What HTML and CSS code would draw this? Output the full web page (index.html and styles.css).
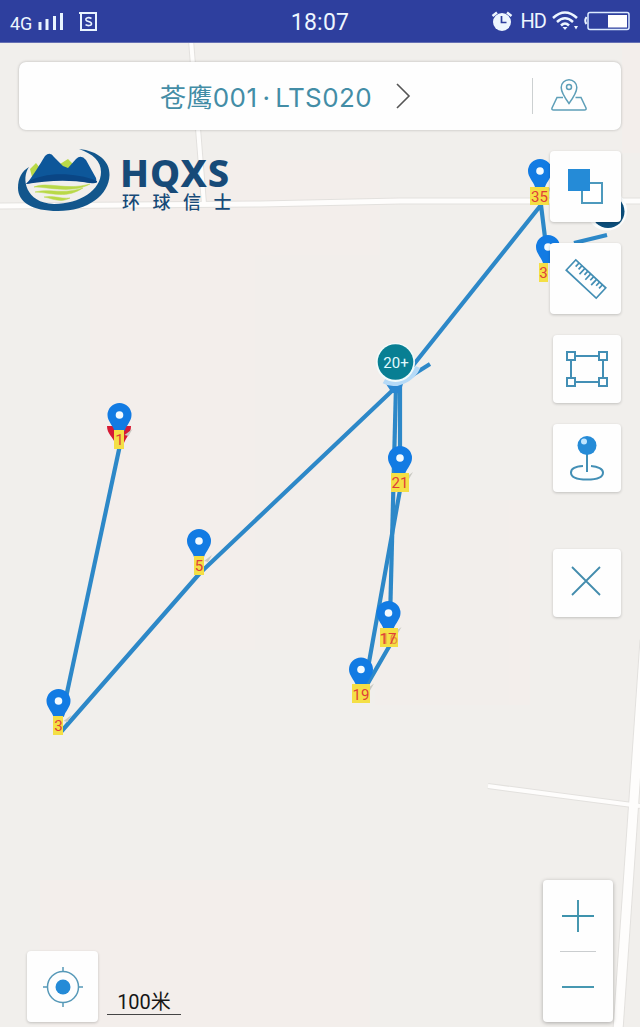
FILE: index.html
```
<!DOCTYPE html>
<html lang="zh-CN">
<head>
    <meta charset="UTF-8">
    <meta name="viewport" content="width=device-width, initial-scale=1.0">
    <title>苍鹰001·LTS020</title>
    <link rel="stylesheet" href="styles.css">
</head>
<body>
    <div class="screen">
        <svg class="map" viewBox="0 0 640 1027">
            <defs>
                <g id="pin">
                    <path d="M5 20L13 14L9 21Z" fill="#c9c9c2"/>
                    <path d="M0 -12A12 12 0 0 0 -12 0C-12 6 -7 10 -5 16H5C7 10 12 6 12 0A12 12 0 0 0 0 -12Z"/>
                    <circle r="3.8" fill="#f2faff"/>
                </g>
            </defs>

            <!-- tinted land -->
            <g class="land">
                <rect x="90" y="160" width="290" height="490"/>
                <rect x="375" y="500" width="155" height="205"/>
                <rect x="40" y="880" width="330" height="147"/>
                <rect x="622" y="43" width="18" height="110"/>
            </g>

            <!-- roads -->
            <g class="road-edge">
                <path d="M191 40L204 204" stroke-width="6"/>
                <path d="M0 206L260 204L400 201L640 201" stroke-width="7"/>
                <path d="M488 786L640 806" stroke-width="6"/>
                <path d="M645 640L618 1030" stroke-width="11"/>
            </g>
            <g class="road">
                <path d="M191 40L204 204" stroke-width="4"/>
                <path d="M0 206L260 204L400 201L640 201" stroke-width="5"/>
                <path d="M488 786L640 806" stroke-width="4"/>
                <path d="M645 640L618 1030" stroke-width="9"/>
            </g>

            <!-- track -->
            <g class="track">
                <path d="M120 445L62 716"/>
                <path d="M60 733L200 573L395 388L541 205L548 262"/>
                <path d="M396 386L390 620"/>
                <path d="M400 386L400 490L364 690L390 645"/>
                <path d="M395 386L430 364"/>
                <path d="M574 243L607 235"/>
                <path d="M386 384H403L400 393H392Z" fill="#2a87d0" stroke="none"/>
            </g>

            <path d="M384 381C396 388 413 379 418 367" fill="none" stroke="#b5daf7" stroke-width="5"/>
            <circle cx="395.500" cy="362.500" r="19.500" fill="#f2fbfb"/>
            <circle cx="395.500" cy="362" r="17.800" fill="#087f93"/>
            <text class="cluster" x="396" y="368">20+</text>

            <circle cx="607" cy="210.500" r="20" fill="#fbfdfd"/>
            <circle cx="608" cy="211.500" r="16.500" fill="#0c4f7c"/>

            <!-- points -->
            <path d="M107 426C107 434 113 437 115 443H124C126 437 131 434 131 426Z" fill="#d61a34"/>
            <g class="pins">
                <use href="#pin" x="119.500" y="415"/>
                <use href="#pin" x="199" y="541"/>
                <use href="#pin" x="58.500" y="701"/>
                <use href="#pin" x="400" y="458"/>
                <use href="#pin" x="388.500" y="613"/>
                <use href="#pin" x="361" y="669.500"/>
                <use href="#pin" x="540" y="171"/>
                <use href="#pin" x="548" y="247"/>
            </g>
            <g class="tags">
                <rect x="114" y="430" width="10" height="19"/>
                <rect x="194" y="556" width="10" height="19"/>
                <rect x="53" y="716" width="10" height="19"/>
                <rect x="391" y="473" width="18" height="19"/>
                <rect x="380" y="628" width="18" height="19"/>
                <rect x="352" y="684" width="18" height="19"/>
                <rect x="530" y="187" width="19" height="18"/>
                <rect x="539" y="263" width="9" height="19"/>
            </g>
            <g class="numbers">
                <text x="119.500" y="445">1</text>
                <text x="199" y="571">5</text>
                <text x="58.500" y="731">3</text>
                <text x="400" y="488">21</text>
                <text x="389.500" y="643.500" opacity=".5">16</text>
                <text x="388" y="643.500">17</text>
                <text x="361" y="700">19</text>
                <text x="539.500" y="201.500">35</text>
                <text x="543.500" y="278">3</text>
            </g>
        </svg>

        <header class="status">
            <div class="status-left">
                <span class="net">4G</span>
                <svg class="signal" width="26" height="20" viewBox="0 0 26 20">
                    <path d="M2 19V11M9 19V8M16.500 19V5M23.500 19V2" stroke="#e8f4ff" stroke-width="3"/>
                </svg>
                <svg class="sim" width="18" height="20" viewBox="0 0 18 20" fill="none" stroke="#e8f4ff">
                    <path d="M0 2H17V19H2V2" stroke-width="2"/>
                    <path d="M12.500 7.500C10 6 6.500 6.500 7 9C7.500 11 12.500 10 12.500 12.800C12.500 15 8.500 15 6.500 13.700" stroke-width="1.600"/>
                </svg>
            </div>
            <span class="time">18:07</span>
            <div class="status-right">
                <svg width="22" height="20" viewBox="0 0 22 20">
                    <circle cx="11" cy="11" r="9" fill="#edf6ff"/>
                    <path d="M1.500 5L6 1.500M20.500 5L16 1.500" stroke="#edf6ff" stroke-width="2.500"/>
                    <path d="M10.500 5V11.500H15.500" fill="none" stroke="#2e3f9e" stroke-width="1.700"/>
                </svg>
                <span class="hd">HD</span>
                <svg class="wifi" width="28" height="20" viewBox="0 0 28 20" fill="none" stroke="#edf6ff" stroke-width="2.500">
                    <path d="M1 7Q13 -4 25 7M5 11Q13 3.500 21 11M9 14.500Q13 10.500 17 14.500"/>
                    <path d="M10.500 16H15.500L13 19Z" fill="#edf6ff" stroke="none"/>
                    <path d="M22 15H26L24 18.500Z" fill="#edf6ff" stroke="none"/>
                </svg>
                <svg width="46" height="20" viewBox="0 0 46 20">
                    <path d="M2.500 6Q0 10 2.500 13" fill="none" stroke="#edf6ff" stroke-width="2"/>
                    <rect x="4" y="1.500" width="41" height="17" rx="2" fill="none" stroke="#dcebff" stroke-width="1.500"/>
                    <rect x="24" y="4" width="19" height="12.500" fill="#fff"/>
                </svg>
            </div>
        </header>

        <main class="overlay">
            <div class="search">
                <div class="device">
                    <span class="device-name">苍鹰001<span class="dot">·</span>LTS020</span>
                    <svg width="16" height="28" viewBox="0 0 16 28">
                        <path d="M2 2L14 14L2 26" fill="none" stroke="#555" stroke-width="1.600"/>
                    </svg>
                </div>
                <div class="place">
                    <svg width="36" height="34" viewBox="0 0 36 34" fill="none" stroke="#5e9fb8" stroke-width="1.500">
                        <path d="M18 25.500C14 20 10.200 14.500 10.200 9.500A7.800 7.800 0 0 1 25.800 9.500C25.800 14.500 22 20 18 25.500Z"/>
                        <circle cx="18" cy="9" r="2.500"/>
                        <path d="M12 19.500H6L1 30Q.5 32 2.500 32H33.500Q35.500 32 35 30L30 19.500H24.500"/>
                    </svg>
                </div>
            </div>

            <div class="middle">
                <div class="logo">
                    <svg width="94" height="66" viewBox="0 0 94 66">
                        <path d="M61 1C80 3 92 13 91.500 27C91 47 70 63 40 63C14 63 0 54 0 40C0 30 4 23 11 19C3 30 7 55 36 56C62 56 83 42 83 24C83 13 75 6 61 1Z" fill="#12568c"/>
                        <path d="M12 21L18 15L22 20L14 29ZM42 16L50 11L56 17L51 23Z" fill="#b9d948"/>
                        <path d="M8 36C14 30 22 16 27 8Q32 3 36 9L45 18L50 20L58 11Q63 6 68 12L78 30Q80 35 72 35C48 30 28 32 8 36Z" fill="#0d579a"/>
                        <path d="M10 34C26 24 56 24 79 33Q80 36 72 35C48 31 28 33 8 36Z" fill="#0a4685"/>
                        <path d="M16 39C29 33 49 43 72 36C54 46 31 39 16 39ZM17 44C33 40 42 47 65 40C48 51 36 45 17 44ZM26 49C35 47 42 51 52 50C43 55 36 51 26 49Z" fill="#b9d948" stroke="#b9d948" stroke-width=".5"/>
                    </svg>
                    <div class="logo-text">
                        <span class="brand">HQXS</span>
                        <span class="brand-cn">环球信士</span>
                    </div>
                </div>

                <div class="tools">
                    <button class="tool tool-large">
                        <svg width="36" height="36" viewBox="0 0 36 36">
                            <path d="M14 14H34V34H14Z" fill="#fff" stroke="#4d99bd" stroke-width="2"/>
                            <path d="M0 0H22V22H0Z" fill="#258bd7"/>
                        </svg>
                    </button>
                    <button class="tool tool-large">
                        <svg width="42" height="42" viewBox="0 0 42 42">
                            <g transform="rotate(43 21 21)" fill="none" stroke="#438eb4" stroke-width="1.700">
                                <rect x="0.500" y="14" width="41" height="14"/>
                                <path d="M5 14V19M9 14V19M13 14V22M17 14V19M21 14V22M25 14V19M29 14V22M33 14V19M37 14V19"/>
                            </g>
                        </svg>
                    </button>
                    <button class="tool">
                        <svg width="44" height="38" viewBox="0 0 44 38" fill="none" stroke="#438fb5" stroke-width="2">
                            <path d="M9 6H35M9 32H35M6 9V29M38 9V29"/>
                            <path d="M2 2H10V10H2ZM34 2H42V10H34ZM2 28H10V36H2ZM34 28H42V36H34Z"/>
                        </svg>
                    </button>
                    <button class="tool">
                        <svg width="36" height="46" viewBox="0 0 36 46" fill="none" stroke="#438fb5" stroke-width="2">
                            <path d="M14 31C6 31.500 2 34 2 37.500C2 42 8 44.500 18 44.500S34 42 34 37.500C34 34 29 31.500 22 31"/>
                            <path d="M18 18V37"/>
                            <circle cx="18" cy="10.500" r="9.500" fill="#258bd7" stroke="none"/>
                            <circle cx="15" cy="6.500" r="3" fill="#bfe5ff" stroke="none"/>
                        </svg>
                    </button>
                    <button class="tool tool-close">
                        <svg width="32" height="32" viewBox="0 0 32 32">
                            <path d="M2 2L30 30M30 2L2 30" stroke="#438cad" stroke-width="1.800"/>
                        </svg>
                    </button>
                </div>
            </div>

            <div class="bottom">
                <div class="bottom-left">
                    <button class="tool tool-large">
                        <svg width="42" height="42" viewBox="0 0 42 42">
                            <circle cx="21" cy="21" r="15.500" fill="none" stroke="#5799b8" stroke-width="1.500"/>
                            <path d="M21 1V6M21 36V41M1 21H6M36 21H41" stroke="#5799b8" stroke-width="1.500"/>
                            <circle cx="21" cy="21" r="7.500" fill="#258bd7"/>
                        </svg>
                    </button>
                    <div class="scale">100米</div>
                </div>
                <div class="zoom">
                    <svg width="32" height="32" viewBox="0 0 32 32"><path d="M0 16H32M16 0V32" stroke="#3e93ad" stroke-width="1.900"/></svg>
                    <span class="zoom-line"></span>
                    <svg width="32" height="32" viewBox="0 0 32 32"><path d="M0 16H32" stroke="#3e93ad" stroke-width="1.900"/></svg>
                </div>
            </div>
        </main>
    </div>
</body>
</html>
```
FILE: styles.css
```
* {
    box-sizing: border-box;
}

body {
    margin: 0;
    font-family: Roboto, "Noto Sans CJK SC", sans-serif;
}

svg {
    display: block;
    flex-shrink: 0;
}

.screen {
    position: relative;
    display: flex;
    flex-direction: column;
    width: 640px;
    height: 1027px;
    overflow: hidden;
    background: #f1efec;
}

.map {
    position: absolute;
    inset: 0;
    width: 640px;
    height: 1027px;
}

.land {
    fill: #f5eeeb;
    opacity: .35;
}

.road-edge {
    fill: none;
    stroke: #e3e1de;
}

.road {
    fill: none;
    stroke: #fefdfc;
}

.track {
    fill: none;
    stroke: #2d88c8;
    stroke-width: 4.2;
    stroke-linejoin: round;
}

.pins {
    fill: #127be3;
}

.tags {
    fill: #f4df45;
}

.numbers {
    fill: #df3f38;
    font-size: 15px;
    text-anchor: middle;
}

.cluster {
    fill: #e1faff;
    font-size: 15px;
    text-anchor: middle;
}

.status {
    position: relative;
    display: grid;
    grid-template-columns: 1fr auto 1fr;
    align-items: center;
    height: 43px;
    padding: 0 10px;
    background: #2e3f9e;
    color: #edf6ff;
    border-bottom: 1px solid #6570b4;
}

.status-left,
.status-right {
    display: flex;
    align-items: center;
}

.net {
    font-size: 18px;
    line-height: 20px;
    letter-spacing: -.2px;
    padding-top: 5px;
}

.signal {
    margin-left: 6px;
}

.sim {
    margin-left: 15px;
}

.time {
    font-size: 23px;
    letter-spacing: .2px;
    padding-top: 2px;
}

.status-right {
    justify-content: flex-end;
}

.hd {
    margin-left: 8px;
    font-size: 20px;
    font-weight: 400;
    letter-spacing: -1px;
}

.wifi {
    margin: 0 4px 0 6px;
}

.overlay {
    position: relative;
    display: flex;
    flex: 1;
    flex-direction: column;
    padding: 19px 19px 5px;
}

.search {
    display: flex;
    align-items: center;
    height: 68px;
    background: #fefefe;
    border-radius: 7px;
    box-shadow: 0 0 3px rgba(0, 0, 0, .25);
}

.device {
    display: flex;
    flex: 1;
    align-items: center;
    padding-left: 141px;
    color: #438da6;
}

.device-name {
    width: 235px;
    margin-top: -2px;
    font-family: Inter, "Noto Sans CJK SC", sans-serif;
    font-size: 26px;
    font-weight: 400;
    letter-spacing: .4px;
    white-space: nowrap;
}

.dot {
    padding: 0 5px;
}

.place {
    display: flex;
    justify-content: center;
    width: 89px;
    height: 36px;
    padding-right: 17px;
    border-left: 1px solid #ccd0d1;
}

.middle {
    display: flex;
    align-items: flex-start;
    justify-content: space-between;
    padding-top: 18px;
}

.logo {
    display: flex;
    margin-left: -1px;
}

.logo-text {
    display: flex;
    flex-direction: column;
    padding: 10px 0 0 8px;
    color: #174a78;
}

.brand {
    font-family: "Noto Sans", sans-serif;
    font-size: 38px;
    font-weight: 800;
    line-height: 28px;
    letter-spacing: 1px;
}

.brand-cn {
    padding: 6px 0 0 2px;
    font-family: "Noto Sans CJK SC", sans-serif;
    font-size: 18px;
    font-weight: 500;
    line-height: 18px;
    letter-spacing: 12.5px;
    white-space: nowrap;
}

.tools {
    display: flex;
    flex-direction: column;
    align-items: flex-end;
    gap: 21px;
    padding-top: 3px;
}

.tool {
    display: flex;
    align-items: center;
    justify-content: center;
    width: 68px;
    height: 68px;
    padding: 0;
    border: none;
    border-radius: 4px;
    background: #fefefe;
    box-shadow: 0 1px 3px rgba(0, 0, 0, .2);
}

.tool-large {
    width: 71px;
    height: 71px;
}

.tool-close {
    margin-top: 36px;
    padding: 0 2px 4px 0;
}

.bottom {
    display: flex;
    align-items: flex-end;
    justify-content: space-between;
    margin-top: auto;
    padding: 0 8px;
}

.bottom-left {
    display: flex;
    align-items: flex-end;
    gap: 9px;
}

.scale {
    width: 74px;
    height: 28px;
    margin-bottom: 7px;
    border-bottom: 1px solid #444;
    color: #161616;
    font-size: 20px;
    line-height: 30px;
    text-align: center;
}

.zoom {
    display: flex;
    flex-direction: column;
    align-items: center;
    justify-content: center;
    gap: 19px;
    width: 70px;
    height: 142px;
    border-radius: 4px;
    background: #fefefe;
    box-shadow: 0 1px 4px rgba(0, 0, 0, .3);
}

.zoom-line {
    width: 36px;
    height: 1px;
    background: #cacdcf;
}
```
